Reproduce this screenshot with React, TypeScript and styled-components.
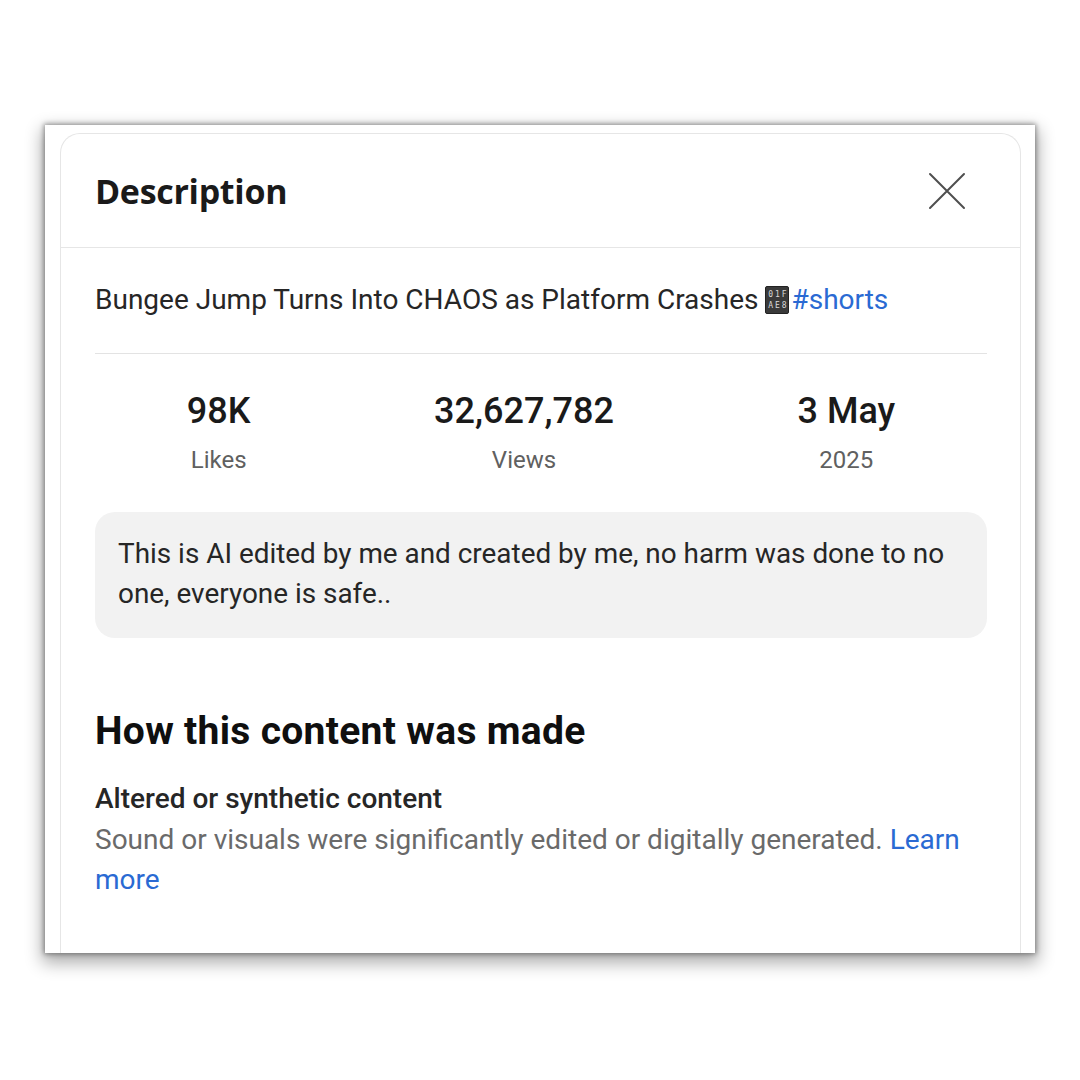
import React from "react";
import styled, { createGlobalStyle } from "styled-components";

const GlobalStyle = createGlobalStyle`
  html, body {
    margin: 0;
    padding: 0;
    background: #ffffff;
  }
  body {
    font-family: Roboto, "Liberation Sans", Arial, sans-serif;
    color: #0f0f0f;
  }
`;

const Page = styled.div`
  width: 1080px;
  height: 1080px;
  padding-top: 125px;
  padding-left: 45px;
  box-sizing: border-box;
`;

const Frame = styled.div`
  width: 990px;
  height: 828px;
  background: #ffffff;
  box-shadow:
    0 0 5px 1px rgba(0, 0, 0, 0.4),
    0 7px 16px 3px rgba(0, 0, 0, 0.32);
  overflow: hidden;
  padding: 8px 14px 0 15px;
  box-sizing: border-box;
`;

const Card = styled.div`
  height: 100%;
  border: 1px solid #e6e6e6;
  border-bottom: none;
  border-radius: 20px 20px 0 0;
  box-sizing: border-box;
`;

const Header = styled.div`
  height: 114px;
  display: flex;
  align-items: center;
  justify-content: space-between;
  padding: 0 54px 0 34px;
  border-bottom: 1px solid #e6e6e6;
  box-sizing: border-box;
`;

const Title = styled.h2`
  margin: 0;
  font-family: "Open Sans", "Noto Sans", sans-serif;
  font-weight: 700;
  font-size: 34px;
  color: #1a1a1a;
  letter-spacing: -0.3px;
`;

const CloseButton = styled.button`
  border: none;
  background: none;
  padding: 0;
  width: 38px;
  height: 38px;
  display: flex;
  align-items: center;
  justify-content: center;
  cursor: pointer;
`;

const Body = styled.div`
  padding: 36px 33px 0 34px;
`;

const Headline = styled.p`
  margin: 0;
  font-size: 28px;
  line-height: 32px;
  color: #262626;
  padding-bottom: 37px;
  border-bottom: 1px solid #e3e3e3;
  display: flex;
  align-items: center;
  white-space: pre;
`;

const Tofu = styled.span`
  display: inline-grid;
  grid-template-columns: repeat(3, 1fr);
  align-content: center;
  width: 24px;
  height: 28px;
  margin-right: 2px;
  padding: 1px;
  box-sizing: border-box;
  background: #3a3a3a;
  border: 1px solid #222;
  border-radius: 2px;
  font-family: "DejaVu Sans Mono", monospace;
  font-size: 8px;
  line-height: 11px;
  color: #d8d8d8;
  text-align: center;
`;

const Link = styled.a`
  color: #2a6ad3;
  text-decoration: none;
`;

const Stats = styled.div`
  display: flex;
  justify-content: space-around;
  margin-top: 37px;
`;

const Stat = styled.div`
  display: flex;
  flex-direction: column;
  align-items: center;
`;

const StatValue = styled.div`
  font-size: 36px;
  line-height: 40px;
  font-weight: 500;
  color: #1a1a1a;
`;

const StatLabel = styled.div`
  margin-top: 14px;
  font-size: 24px;
  line-height: 30px;
  color: #606060;
`;

const Note = styled.div`
  margin-top: 37px;
  background: #f2f2f2;
  border-radius: 20px;
  padding: 22px 23px 24px;
  font-size: 27.9px;
  line-height: 40px;
  color: #262626;
`;

const SectionTitle = styled.h3`
  margin: 71px 0 0;
  font-size: 39px;
  line-height: 44px;
  font-weight: 700;
  letter-spacing: 0.3px;
  color: #0f0f0f;
`;

const SubTitle = styled.div`
  margin-top: 29px;
  font-size: 28px;
  line-height: 34px;
  font-weight: 500;
  color: #262626;
`;

const SubText = styled.div`
  margin-top: 4px;
  font-size: 28px;
  line-height: 40px;
  color: #6a6a6a;
`;

const stats = [
  { value: "98K", label: "Likes" },
  { value: "32,627,782", label: "Views" },
  { value: "3 May", label: "2025" },
];

export default function App() {
  return (
    <>
      <GlobalStyle />
      <Page>
        <Frame>
          <Card>
            <Header>
              <Title>Description</Title>
              <CloseButton aria-label="Close">
                <svg width="38" height="38" viewBox="0 0 38 38">
                  <path
                    d="M2 2 L36 36 M36 2 L2 36"
                    stroke="#4f4f4f"
                    strokeWidth="2"
                    strokeLinecap="round"
                  />
                </svg>
              </CloseButton>
            </Header>
            <Body>
              <Headline>
                {"Bungee Jump Turns Into CHAOS as Platform Crashes "}
                <Tofu>
                  <span>0</span>
                  <span>1</span>
                  <span>F</span>
                  <span>A</span>
                  <span>E</span>
                  <span>8</span>
                </Tofu>
                <Link href="#">#shorts</Link>
              </Headline>
              <Stats>
                {stats.map((s) => (
                  <Stat key={s.label}>
                    <StatValue>{s.value}</StatValue>
                    <StatLabel>{s.label}</StatLabel>
                  </Stat>
                ))}
              </Stats>
              <Note>
                This is AI edited by me and created by me, no harm was done to no
                one, everyone is safe..
              </Note>
              <SectionTitle>How this content was made</SectionTitle>
              <SubTitle>Altered or synthetic content</SubTitle>
              <SubText>
                Sound or visuals were significantly edited or digitally generated.{" "}
                <Link href="#">Learn more</Link>
              </SubText>
            </Body>
          </Card>
        </Frame>
      </Page>
    </>
  );
}
